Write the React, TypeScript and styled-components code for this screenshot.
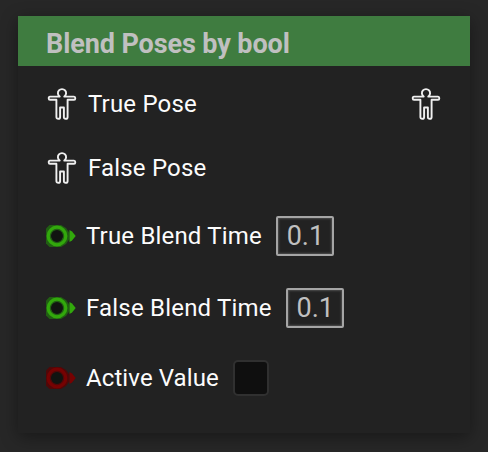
import React from "react";
import styled, { createGlobalStyle } from "styled-components";

const GlobalStyle = createGlobalStyle`
  * { box-sizing: border-box; }
  body { margin: 0; background: #272727; font-family: Roboto, "Liberation Sans", sans-serif; }
`;

const Canvas = styled.main`
  width: 488px;
  height: 452px;
  padding: 16px 18px 19px;
  overflow: hidden;
  background: #272727;
`;

const Node = styled.section`
  height: 417px;
  background: #222222;
  box-shadow: 0 4px 16px rgba(0, 0, 0, 0.38);
`;

const Header = styled.header`
  height: 50px;
  padding-left: 28px;
  background: #3f7c40;
`;

const Title = styled.h1`
  margin: 0;
  padding-top: 2px;
  color: #c0c0c0;
  font-size: 27px;
  font-weight: 700;
  line-height: 52px;
  letter-spacing: -0.1px;
  white-space: nowrap;
`;

const Pins = styled.div`
  padding: 6px 28px 0;
`;

const Row = styled.div<{ $height: number; $gap: number }>`
  display: flex;
  align-items: center;
  height: ${(p) => p.$height}px;
  gap: ${(p) => p.$gap}px;
`;

const Label = styled.span<{ $spacing?: number }>`
  color: #fcfcfc;
  font-size: 24px;
  line-height: 32px;
  letter-spacing: ${(p) => p.$spacing ?? 0.18}px;
  white-space: nowrap;
`;

const PoseSvg = styled.svg<{ $output?: boolean }>`
  display: block;
  flex: none;
  margin-left: ${(p) => (p.$output ? "auto" : "0")};
`;

const PinSvg = styled.svg`
  display: block;
  flex: none;
`;

const NumberBox = styled.div`
  display: flex;
  align-items: center;
  justify-content: center;
  width: 58px;
  height: 40px;
  margin-left: 4px;
  padding-left: 1px;
  border: 2px solid #a5a5a5;
  border-radius: 2px;
  box-shadow: inset 0 0 2px 1px #4c4c4c;
  color: #c0c0c0;
  font-size: 27px;
  line-height: 36px;
`;

const CheckBox = styled.div`
  width: 36px;
  height: 36px;
  margin-left: 4px;
  border: 2px solid #303030;
  border-radius: 5px;
  background: #0f0f0f;
`;

const PosePin = ({ output }: { output?: boolean }) => (
  <PoseSvg $output={output} width="32" height="34" viewBox="0 0 32 34" fill="none" stroke="#f0f0f0" strokeWidth="1.9" strokeLinejoin="round">
    <path d="M13.7 9.6A4.1 4.1 0 1 1 18.3 9.6H28Q29.3 9.6 29.3 11.2T28 12.8H21.6V30.2Q21.6 31.8 19.7 31.8T17.9 30.2V20.5H14.1V30.2Q14.1 31.8 12.3 31.8T10.4 30.2V12.8H4Q2.7 12.8 2.7 11.2T4 9.6Z" />
  </PoseSvg>
);

const ValuePin = ({ color, edge }: { color: string; edge: string }) => (
  <PinSvg width="30" height="24" viewBox="0 0 30 24">
    <path d="M3.5 1H15L20 4L23.5 9V15L20 20L15 23H3.5L0 19.5V4.5Z" fill={edge} />
    <path d="M23.5 6L26 7.5L29.7 12L26 16.5L23.5 18Z" fill={color} />
    <circle cx="11" cy="12" r="8.4" fill="#111411" stroke={color} strokeWidth="4" />
    <circle cx="11" cy="12" r="6.6" fill="none" stroke={edge} strokeWidth="1.2" />
  </PinSvg>
);

const ValueRow = ({ label, height, color, edge, children, spacing }: {
  label: string; height: number; color: string; edge: string; spacing?: number; children: React.ReactNode;
}) => (
  <Row $height={height} $gap={10}>
    <ValuePin color={color} edge={edge} />
    <Label $spacing={spacing}>{label}</Label>
    {children}
  </Row>
);

export default function App() {
  return (
    <>
      <GlobalStyle />
      <Canvas>
        <Node>
          <Header><Title>Blend Poses by bool</Title></Header>
          <Pins>
            <Row $height={64} $gap={10}>
              <PosePin />
              <Label>True Pose</Label>
              <PosePin output />
            </Row>
            <Row $height={64} $gap={10}>
              <PosePin />
              <Label>False Pose</Label>
            </Row>
            <ValueRow label="True Blend Time" height={72} color="#32a80c" edge="#215f13"><NumberBox>0.1</NumberBox></ValueRow>
            <ValueRow label="False Blend Time" height={72} spacing={0.2} color="#32a80c" edge="#215f13"><NumberBox>0.1</NumberBox></ValueRow>
            <ValueRow label="Active Value" height={68} spacing={0.1} color="#760202" edge="#500808"><CheckBox /></ValueRow>
          </Pins>
        </Node>
      </Canvas>
    </>
  );
}
